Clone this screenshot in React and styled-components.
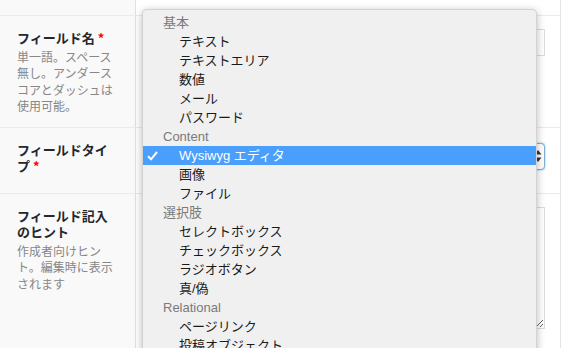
import React from 'react';
import styled, { createGlobalStyle } from 'styled-components';

const GlobalStyle = createGlobalStyle`
  html, body {
    margin: 0;
    padding: 0;
    background: #fff;
  }
  body {
    font-family: "Liberation Sans", "Noto Sans CJK JP", sans-serif;
    -webkit-font-smoothing: antialiased;
  }
`;

const Page = styled.div`
  position: relative;
  width: 566px;
  height: 348px;
  overflow: hidden;
  background: #fff;
`;

const FieldTable = styled.div`
  width: 561px;
  border-right: 1px solid #e5e5e5;
  box-sizing: border-box;
`;

const Row = styled.div`
  display: grid;
  grid-template-columns: 136px 1fr;
  height: ${props => props.height}px;
  border-bottom: 1px solid #ebebeb;
  box-sizing: border-box;
  overflow: hidden;
`;

const LabelCell = styled.div`
  background: #f9f9f9;
  border-right: 1px solid #e1e1e1;
  padding: ${props => (props.empty ? '0' : '14px 17px 0')};
  box-sizing: border-box;
`;

const InputCell = styled.div`
  padding: ${props => (props.empty ? '0' : '13px 15px 0 12px')};
  box-sizing: border-box;
`;

const Label = styled.div`
  font-size: 13px;
  font-weight: bold;
  line-height: 16px;
  color: #23282d;
  font-family: "Noto Sans CJK JP", sans-serif;
`;

const Required = styled.span`
  color: #f00;
  margin-left: 3px;
`;

const Hint = styled.p`
  margin: 3px 0 0;
  font-size: 12px;
  line-height: 16.3px;
  color: #878787;
  font-family: "Noto Sans CJK JP", sans-serif;
`;

const TextInput = styled.input`
  display: block;
  width: 100%;
  height: 27px;
  box-sizing: border-box;
  border: 1px solid #ddd;
  border-radius: 0;
  background: #fff;
  outline: none;
`;

const SelectWrap = styled.div`
  position: relative;
  margin-top: 2px;
`;

const SelectBox = styled.div`
  height: 27px;
  box-sizing: border-box;
  border: 1px solid #7eaedb;
  border-radius: 4px;
  box-shadow: 0 0 2px rgba(30, 140, 190, 0.6);
  background: #fff;
`;

const SelectArrows = styled.svg`
  position: absolute;
  right: 3px;
  top: 6px;
`;

const TextArea = styled.textarea`
  display: block;
  width: 100%;
  height: 122px;
  box-sizing: border-box;
  border: 1px solid #ddd;
  border-radius: 0;
  background: #fff;
  resize: both;
  outline: none;
`;

const Menu = styled.div`
  position: absolute;
  left: 142px;
  top: 9px;
  width: 395px;
  padding-top: 3px;
  background: #f0f0f0;
  border: 1px solid rgba(0, 0, 0, 0.12);
  border-radius: 5px 5px 0 0;
  box-shadow: 0 2px 9px rgba(0, 0, 0, 0.28);
  box-sizing: border-box;
`;

const GroupLabel = styled.div`
  height: 19px;
  line-height: 19px;
  padding-left: 20px;
  font-size: 13px;
  color: #7a7a7a;
`;

const Option = styled.div`
  position: relative;
  height: 19px;
  line-height: 19px;
  padding-left: 36px;
  font-size: 13px;
  color: ${props => (props.selected ? '#fff' : '#1a1a1a')};
  background: ${props => (props.selected ? '#4a9efc' : 'transparent')};
`;

const Check = styled.svg`
  position: absolute;
  left: 4px;
  top: 5px;
`;

const menuGroups = [
  { label: '基本', options: ['テキスト', 'テキストエリア', '数値', 'メール', 'パスワード'] },
  { label: 'Content', options: ['Wysiwyg エディタ', '画像', 'ファイル'] },
  { label: '選択肢', options: ['セレクトボックス', 'チェックボックス', 'ラジオボタン', '真/偽'] },
  { label: 'Relational', options: ['ページリンク', '投稿オブジェクト'] },
];

const selectedOption = 'Wysiwyg エディタ';

const FieldTypeMenu = () => (
  <Menu>
    {menuGroups.map(group => (
      <div key={group.label}>
        <GroupLabel>{group.label}</GroupLabel>
        {group.options.map(option => (
          <Option key={option} selected={option === selectedOption}>
            {option === selectedOption && (
              <Check width="11" height="10" viewBox="0 0 11 10">
                <path d="M1 5.2 L4 8.3 L10 1" fill="none" stroke="#fff" strokeWidth="2" />
              </Check>
            )}
            {option}
          </Option>
        ))}
      </div>
    ))}
  </Menu>
);

const App = () => (
  <Page>
    <GlobalStyle />
    <FieldTable>
      <Row height={16}>
        <LabelCell empty />
        <InputCell empty />
      </Row>
      <Row height={112}>
        <LabelCell>
          <Label>
            フィールド名<Required>*</Required>
          </Label>
          <Hint>単一語。スペース無し。アンダースコアとダッシュは使用可能。</Hint>
        </LabelCell>
        <InputCell>
          <TextInput type="text" />
        </InputCell>
      </Row>
      <Row height={66}>
        <LabelCell>
          <Label>
            フィールドタイプ<Required>*</Required>
          </Label>
        </LabelCell>
        <InputCell>
          <SelectWrap>
            <SelectBox />
            <SelectArrows width="8" height="14" viewBox="0 0 8 14">
              <path d="M4 1 L7.5 5.5 L0.5 5.5 Z" fill="#333" />
              <path d="M4 13 L7.5 8.5 L0.5 8.5 Z" fill="#333" />
            </SelectArrows>
          </SelectWrap>
        </InputCell>
      </Row>
      <Row height={160}>
        <LabelCell>
          <Label>フィールド記入のヒント</Label>
          <Hint>作成者向けヒント。編集時に表示されます</Hint>
        </LabelCell>
        <InputCell>
          <TextArea />
        </InputCell>
      </Row>
    </FieldTable>
    <FieldTypeMenu />
  </Page>
);

export default App;
